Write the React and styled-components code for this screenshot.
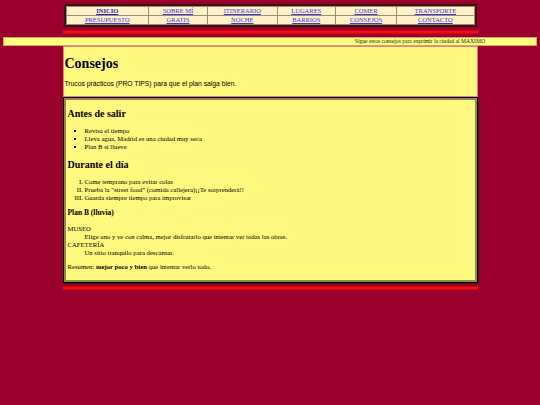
import React from 'react';
import styled, { createGlobalStyle } from 'styled-components';

const GlobalStyle = createGlobalStyle`
  html, body {
    margin: 0;
    padding: 0;
    background: #99002b;
  }
  body {
    font-family: "Liberation Serif", "Times New Roman", serif;
    color: #000;
  }
`;

const Page = styled.div`
  padding-top: 4px;
`;

const Column = styled.div`
  width: 415px;
  margin: 0 auto;
`;

const NavTable = styled.table`
  width: 413px;
  margin: 0 auto;
  border-collapse: separate;
  border-spacing: 1px;
  background: #9c8c6c;
  border: 2px solid #3a1414;
  font-size: 6.5px;
`;

const NavCell = styled.td`
  background: #fff1c9;
  text-align: center;
  padding: 0 2px;
  height: 8px;
  line-height: 8px;
`;

const NavLink = styled.a`
  color: ${(p) => (p.$active ? '#2626b4' : '#3a3ad6')};
  font-weight: ${(p) => (p.$active ? 700 : 400)};
  text-decoration: underline;
`;

const RedBar = styled.div`
  height: 2px;
  background: #ff0a0a;
  border-top: 1px solid #c8001a;
  border-bottom: 1px solid #c8001a;
  margin-top: 3px;
`;

const Ticker = styled.div`
  margin: 3px 3px 0;
  height: 7px;
  background: #ffff80;
  border: 1px solid #e0a070;
  font-size: 5.6px;
  line-height: 7px;
  color: #222;
  text-align: right;
  padding-right: 51px;
  white-space: nowrap;
  overflow: hidden;
`;

const Intro = styled.section`
  background: #fff97f;
  border: 1px solid #e88080;
  padding: 0 1px 8px;
`;

const Title = styled.h1`
  font-size: 14px;
  font-weight: 700;
  margin: 0;
  padding-top: 8px;
  line-height: 17px;
`;

const Lead = styled.p`
  font-family: "Liberation Sans", Arial, sans-serif;
  font-size: 6.75px;
  margin: 8px 0 0;
  line-height: 8px;
`;

const TipsBox = styled.div`
  background: #fff97f;
  border: 1px solid #000;
  box-shadow: inset 0 0 0 2px #8e8c48, 1px 1px 0 #2a2a00;
  padding: 10px 4px 11px;
`;

const SectionTitle = styled.h2`
  font-size: 10px;
  font-weight: 700;
  margin: 0 0 7px;
  line-height: 12px;
`;

const SmallTitle = styled.h3`
  font-size: 7.5px;
  font-weight: 700;
  margin: 0 0 7px;
  line-height: 10px;
`;

const List = styled.ul`
  margin: 0 0 8px;
  padding-left: 17px;
  font-size: 6.7px;
  line-height: 8px;
  list-style: square;
`;

const NumberList = styled.ol`
  margin: 0 0 6px;
  padding-left: 17px;
  font-size: 6.7px;
  line-height: 8px;
  list-style: upper-roman;
`;

const Defs = styled.dl`
  margin: 0 0 6px;
  font-size: 6.7px;
  line-height: 8px;
`;

const Term = styled.dt`
  margin: 0;
`;

const Desc = styled.dd`
  margin: 0 0 0 17px;
`;

const Summary = styled.p`
  font-size: 6.7px;
  line-height: 8px;
  margin: 0;
`;

const navRows = [
  ['INICIO', 'SOBRE MÍ', 'ITINERARIO', 'LUGARES', 'COMER', 'TRANSPORTE'],
  ['PRESUPUESTO', 'GRATIS', 'NOCHE', 'BARRIOS', 'CONSEJOS', 'CONTACTO'],
];

export default function App() {
  return (
    <Page>
      <GlobalStyle />
      <NavTable>
        <tbody>
          {navRows.map((row, r) => (
            <tr key={r}>
              {row.map((item) => (
                <NavCell key={item}>
                  <NavLink href="#" $active={item === 'INICIO'}>
                    {item}
                  </NavLink>
                </NavCell>
              ))}
            </tr>
          ))}
        </tbody>
      </NavTable>
      <Column>
        <RedBar />
      </Column>
      <Ticker>Sigue estos consejos para exprimir la ciudad al MÁXIMO</Ticker>
      <Column>
        <Intro>
          <Title>Consejos</Title>
          <Lead>Trucos prácticos (PRO TIPS) para que el plan salga bien.</Lead>
        </Intro>
        <TipsBox>
          <SectionTitle>Antes de salir</SectionTitle>
          <List>
            <li>Revisa el tiempo</li>
            <li>Lleva agua, Madrid es una ciudad muy seca</li>
            <li>Plan B si llueve</li>
          </List>
          <SectionTitle>Durante el día</SectionTitle>
          <NumberList>
            <li>Come temprano para evitar colas</li>
            <li>Prueba la "street food" (comida callejera)¡¡Te sorprenderá!!</li>
            <li>Guarda siempre tiempo para improvisar</li>
          </NumberList>
          <SmallTitle>Plan B (lluvia)</SmallTitle>
          <Defs>
            <Term>MUSEO</Term>
            <Desc>Elige uno y ve con calma, mejor disfrutarlo que intentar ver todas las obras.</Desc>
            <Term>CAFETERÍA</Term>
            <Desc>Un sitio tranquilo para descansar.</Desc>
          </Defs>
          <Summary>
            Resumen: <strong>mejor poco y bien</strong> que intentar verlo todo.
          </Summary>
        </TipsBox>
        <RedBar />
      </Column>
    </Page>
  );
}
